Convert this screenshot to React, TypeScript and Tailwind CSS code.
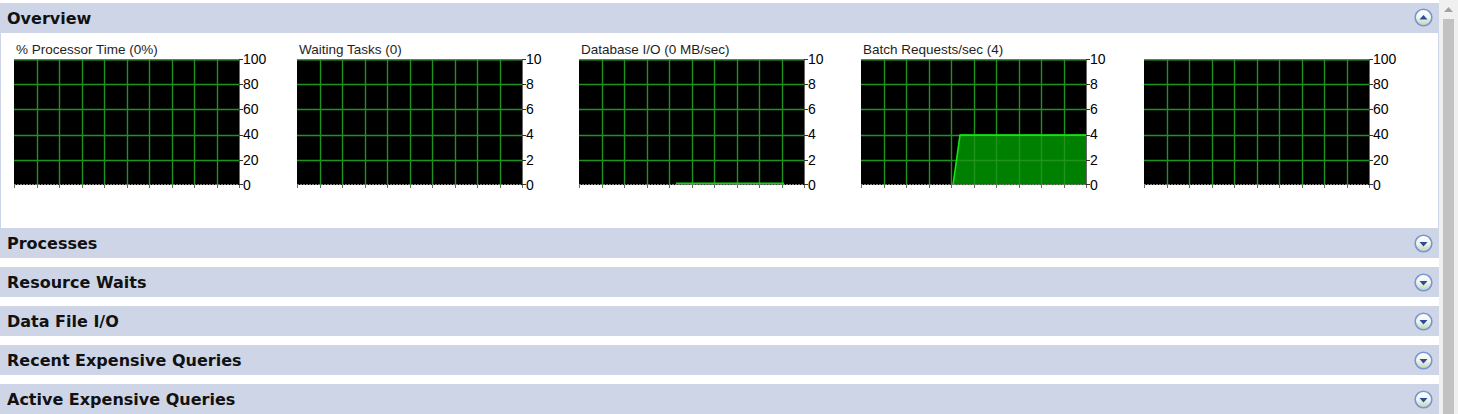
import React from "react";

type ChartDef = {
  title: string;
  max: number;
  line?: [number, number];
  fill?: { x0: number; x1: number; v: number };
};

const charts: ChartDef[] = [
  { title: "% Processor Time (0%)", max: 100 },
  { title: "Waiting Tasks (0)", max: 10 },
  { title: "Database I/O (0 MB/sec)", max: 10, line: [97, 205] },
  { title: "Batch Requests/sec (4)", max: 10, fill: { x0: 92, x1: 99, v: 4 } },
  { title: "", max: 100 },
];

const sections = [
  "Processes",
  "Resource Waits",
  "Data File I/O",
  "Recent Expensive Queries",
  "Active Expensive Queries",
];

const W = 225;
const H = 126;

const ToggleIcon = ({ open }: { open: boolean }) => (
  <svg width="19" height="19" viewBox="0 0 19 19">
    <defs>
      <linearGradient id={open ? "tg-o" : "tg-c"} x1="0" y1="0" x2="0" y2="1">
        <stop offset="0%" stopColor="#ffffff" />
        <stop offset="50%" stopColor="#f1f4f1" />
        <stop offset="100%" stopColor="#bcd2b6" />
      </linearGradient>
    </defs>
    <circle cx="9.5" cy="9.5" r="8.3" fill={`url(#${open ? "tg-o" : "tg-c"})`} stroke="#7896d0" strokeWidth="1.6" />
    {open ? (
      <path d="M5.5 11.5 L9.5 7 L13.5 11.5 Z" fill="#2b4c9c" />
    ) : (
      <path d="M5.5 8 L9.5 12.5 L13.5 8 Z" fill="#2b4c9c" />
    )}
  </svg>
);

const Header = ({ title, open }: { title: string; open: boolean }) => (
  <div className="flex h-[30px] items-center justify-between bg-[#cdd5e6] pl-[7px] pr-[6px]">
    <span className="pt-[2px] font-['DejaVu_Sans'] text-[16px] font-bold leading-none text-[#111]">{title}</span>
    <ToggleIcon open={open} />
  </div>
);

const Chart = ({ chart }: { chart: ChartDef }) => {
  const labels = [5, 4, 3, 2, 1, 0].map((i) => (chart.max / 5) * i);
  const vx = Array.from({ length: 9 }, (_, i) => Math.round(((i + 1) * W) / 10) + 0.5);
  const hy = Array.from({ length: 4 }, (_, i) => Math.round(((i + 1) * H) / 5) + 0.5);
  const fy = chart.fill ? H - (chart.fill.v / chart.max) * H : 0;
  return (
    <div className="pl-[13px]">
      <div className="h-[16px] pl-[2px] font-['Liberation_Sans'] text-[13.5px] leading-[16px] text-[#1e1e1e]">
        {chart.title}
      </div>
      <div className="mt-[1px] flex items-start">
        <svg width={W + 4} height={H + 3}>
          <rect x="0" y="0" width={W} height={H} fill="#000" />
          {chart.fill && (
            <polygon
              points={`${chart.fill.x0},${H} ${chart.fill.x1},${fy} ${W},${fy} ${W},${H}`}
              fill="#008000"
            />
          )}
          {vx.map((x) => (
            <line key={x} x1={x} y1="0" x2={x} y2={H} stroke="#1e931e" strokeWidth="1.4" />
          ))}
          {hy.map((y) => (
            <line key={y} x1="0" y1={y} x2={W} y2={y} stroke="#1e931e" strokeWidth="1.4" />
          ))}
          <line x1="0" y1="0.75" x2={W} y2="0.75" stroke="#2aa52a" strokeWidth="1.5" />
          {chart.fill && (
            <polyline
              points={`${chart.fill.x0},${H} ${chart.fill.x1},${fy + 0.5} ${W},${fy + 0.5}`}
              fill="none"
              stroke="#12e612"
              strokeWidth="1.6"
            />
          )}
          {chart.line && (
            <line x1={chart.line[0]} y1={H - 1.5} x2={chart.line[1]} y2={H - 1.5} stroke="#12d612" strokeWidth="2" />
          )}
          <line x1="0" y1={H - 0.5} x2={W} y2={H - 0.5} stroke="#7a7a7a" strokeDasharray="2 1" />
          {[0.5, ...vx].map((x) => (
            <line key={`t${x}`} x1={x} y1={H} x2={x} y2={H + 3} stroke="#6a6a6a" />
          ))}
          <line x1={W + 0.5} y1="0" x2={W + 0.5} y2={H + 3} stroke="#6a6a6a" />
          {[0.5, ...hy, H - 0.5].map((y) => (
            <line key={`r${y}`} x1={W} y1={y} x2={W + 4} y2={y} stroke="#333" />
          ))}
        </svg>
        <div className="-mt-[8px] flex h-[142px] flex-col justify-between font-['Liberation_Sans'] text-[14px] leading-[16px] text-black">
          {labels.map((l) => (
            <span key={l}>{l}</span>
          ))}
        </div>
      </div>
    </div>
  );
};

export default function App() {
  return (
    <div className="flex h-[414px] w-[1458px] overflow-hidden bg-white">
      <div className="flex w-[1439px] flex-col pt-[3px]">
        <Header title="Overview" open />
        <div className="h-[196px] border-x border-[#cdd5e6] pt-[9px]">
          <div className="grid grid-cols-[283px_282px_282px_283px_283px]">
            {charts.map((c, i) => (
              <Chart key={i} chart={c} />
            ))}
          </div>
        </div>
        <div className="flex flex-col gap-[9px]">
          {sections.map((s) => (
            <Header key={s} title={s} open={false} />
          ))}
        </div>
      </div>
      <div className="flex w-[19px] flex-col bg-[#f0f0f0]">
        <div className="flex h-[19px] items-center justify-center">
          <svg width="9" height="5" viewBox="0 0 9 5">
            <path d="M0 5 L4.5 0 L9 5 Z" fill="#a3a3a3" />
          </svg>
        </div>
        <div className="mx-[4px] flex-1 bg-[#c2c2c2]" />
      </div>
    </div>
  );
}
